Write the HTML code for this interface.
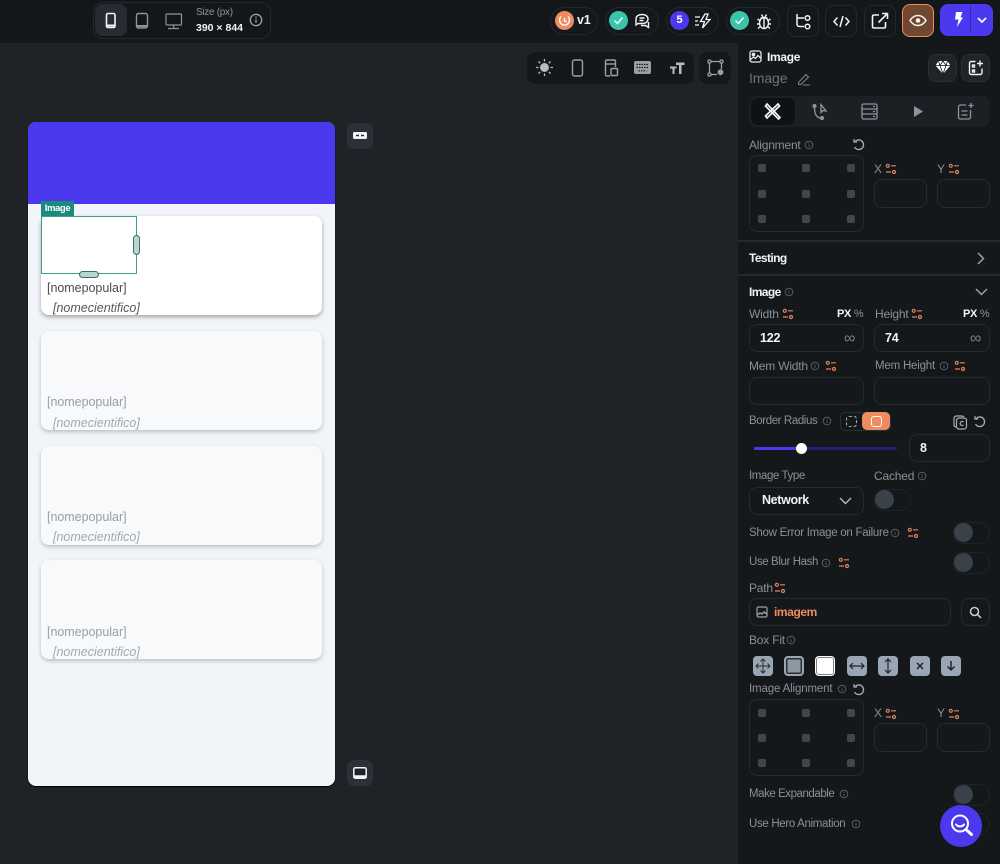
<!DOCTYPE html>
<html><head><meta charset="utf-8">
<style>
*{box-sizing:border-box}
html,body{margin:0;padding:0;width:1000px;height:864px;overflow:hidden;background:#1f2327;font-family:"Liberation Sans",sans-serif}
.a{position:absolute}
.t{position:absolute;white-space:nowrap;font-size:12px;line-height:14px;color:#8a9097;letter-spacing:-.2px}
.n{font-size:11.5px;letter-spacing:-.4px}
.w{color:#f1f4f8;font-weight:700}
.sec{font-size:12px;letter-spacing:-.6px}
.box{position:absolute;border:1.5px solid #252a2e;border-radius:8px;background:#14181b}
.s{position:absolute;overflow:visible;fill:none}
.tog{position:absolute;width:37px;height:22px;border:1.5px solid #1f2428;border-radius:11px}
.tog:before{content:"";position:absolute;left:0;top:0;width:19px;height:19px;border-radius:50%;background:#39414a}
.dot{position:absolute;width:8px;height:8px;background:#3f464e;border-radius:2px}
.pill{position:absolute;height:28px;top:7px;border:1.5px solid #23282c;border-radius:14px;background:#14181b}
.sq{position:absolute;top:5px;width:32px;height:32px;border:1.5px solid #23282c;border-radius:8px;background:#14181b}
.card{position:absolute;left:41px;width:281px;height:99px;background:#f8f9fb;border-radius:8px;box-shadow:0 2px 4px rgba(0,0,0,.22)}
.np{position:absolute;left:6px;font-size:12.5px;line-height:14px;color:#9a9ea3;white-space:nowrap;letter-spacing:-.03px}
.ns{position:absolute;left:12px;font-size:12.5px;line-height:14px;font-style:italic;color:#a3a7ac;white-space:nowrap}
.bf{position:absolute;top:656px;width:20px;height:20px;border-radius:4px;background:#9aa6b3}
</style></head><body>
<svg width="0" height="0" style="position:absolute"><defs>
<symbol id="v" viewBox="0 0 12 12"><g fill="none" stroke="#e2835a" stroke-width="1.200"><circle cx="2.800" cy="2.800" r="1.500"/><circle cx="9" cy="9" r="1.500"/><path d="M6 2.800h5M1 9h5"/></g></symbol>
<symbol id="i" viewBox="0 0 12 12"><g fill="none" stroke="#5f666d" stroke-width="1"><circle cx="6" cy="6" r="4.600"/><path d="M6 5.500v3M6 3.500v1"/></g></symbol>
<symbol id="r" viewBox="0 0 14 14"><g fill="none" stroke="#a8adb3" stroke-width="1.300" stroke-linecap="round"><path d="M3.500 3.200A4.800 4.800 0 1 1 2.800 9.500"/><path d="M2 1.500v2.500h2.600"/></g></symbol>
</defs></svg>

<!-- top bar -->
<div class="a" style="left:0;top:0;width:1000px;height:43px;background:#14171a"></div>
<div class="a" style="left:93px;top:2px;width:178px;height:37px;border:1.500px solid #23282c;border-radius:10px"></div>
<div class="a" style="left:95px;top:4px;width:32px;height:32px;background:#262c31;border-radius:8px"></div>
<svg class="s" style="left:105px;top:12px" width="12" height="17" stroke="#f1f4f8" stroke-width="1.600"><rect x="1.500" y="1.500" width="8.500" height="14" rx="1.500"/><path d="M1.500 13.500h8.500" stroke-width="2"/></svg>
<svg class="s" style="left:135px;top:12px" width="15" height="18" stroke="#8e949b" stroke-width="1.400"><rect x="1.500" y="1.500" width="11" height="14.500" rx="2"/><path d="M1.500 14h11" stroke-width="2"/></svg>
<svg class="s" style="left:165px;top:13px" width="18" height="17" stroke="#8e949b" stroke-width="1.200"><rect x="1" y="1" width="15.500" height="11" rx="1"/><path d="M3 15.500h11M8.700 12v3"/></svg>
<div class="t" style="left:196px;top:6px;font-size:10px;letter-spacing:-.3px;color:#8e949b">Size (px)</div>
<div class="t w" style="left:196px;top:21px;font-size:10.500px;letter-spacing:0">390 × 844</div>
<svg class="s" style="left:249px;top:13px" width="14" height="14" stroke="#9aa0a6" stroke-width="1.300"><circle cx="7" cy="7" r="5.700"/><path d="M7 6.300v3.600M7 3.600v1.400"/></svg>

<div class="pill" style="left:550px;width:48px"></div>
<div class="a" style="left:555px;top:11px;width:19px;height:19px;border-radius:50%;background:#ee8b60"></div>
<svg class="s" style="left:558px;top:14px" width="13" height="13" stroke="#fff" stroke-width="1.400"><path d="M3 2.500A5 5 0 1 0 10 2.500M6.500 4v3l2 1"/></svg>
<div class="t w" style="left:577px;top:13px;font-size:12.500px">v1</div>

<div class="pill" style="left:605px;width:54px"></div>
<div class="a" style="left:609px;top:11px;width:19px;height:19px;border-radius:50%;background:#39c4ab"></div>
<svg class="s" style="left:613px;top:15px" width="11" height="11" stroke="#e8fffa" stroke-width="1.500"><path d="M1.500 5.500l3 3 5-6"/></svg>
<svg class="s" style="left:634px;top:13px" width="17" height="16" stroke="#f1f4f8" stroke-width="1.400"><path d="M8 1.500c3.500 0 6 1.800 6 4.500S11.500 10.500 8 10.500H4L2 12V6c0-2.700 2.500-4.500 6-4.500z"/><path d="M5.500 5h5M5.500 7.500h4M7 12.500h4.500l3 2V9"/></svg>

<div class="pill" style="left:666px;width:53px"></div>
<div class="a" style="left:670px;top:11px;width:19px;height:19px;border-radius:50%;background:#4b39ef;color:#fff;font-size:11px;font-weight:700;text-align:center;line-height:19px">5</div>
<svg class="s" style="left:694px;top:13px" width="18" height="16"><path d="M11 1L6.500 8.500h4L8.500 15 16 6.500h-4L14 1z" stroke="#f1f4f8" stroke-width="1.300"/><path d="M1 4h5M1 8h3M1 12h4" stroke="#f1f4f8" stroke-width="1.300"/></svg>

<div class="pill" style="left:726px;width:54px"></div>
<div class="a" style="left:730px;top:11px;width:19px;height:19px;border-radius:50%;background:#39c4ab"></div>
<svg class="s" style="left:734px;top:15px" width="11" height="11" stroke="#e8fffa" stroke-width="1.500"><path d="M1.500 5.500l3 3 5-6"/></svg>
<svg class="s" style="left:756px;top:13px" width="16" height="17" stroke="#f1f4f8" stroke-width="1.400"><ellipse cx="8" cy="10" rx="4.500" ry="5.500"/><path d="M4.500 5h7M8 5v10M1.500 6l3 2M14.500 6l-3 2M1 11h2.500M15 11h-2.500M2 15.500l2.500-2M14 15.500l-2.500-2M5.500 1.500L7 4M10.500 1.500L9 4"/></svg>

<div class="sq" style="left:787px"></div>
<svg class="s" style="left:795px;top:13px" width="17" height="17" stroke="#f1f4f8" stroke-width="1.500"><path d="M2 1v10c0 1.500 1 2.500 2.500 2.500H9M2 5h7"/><circle cx="12.500" cy="5" r="2.300"/><circle cx="12.500" cy="13.500" r="2.300"/></svg>
<div class="sq" style="left:825px"></div>
<svg class="s" style="left:833px;top:15px" width="17" height="13" stroke="#f1f4f8" stroke-width="1.500"><path d="M4.500 2.500L1 6.500l3.500 4M12.500 2.500l3.500 4-3.500 4M10 1L7 12"/></svg>
<div class="sq" style="left:864px"></div>
<svg class="s" style="left:871px;top:12px" width="18" height="18" stroke="#f1f4f8" stroke-width="1.600"><path d="M8 3H3c-1 0-1.500.5-1.500 1.500v10c0 1 .5 1.500 1.500 1.500h10c1 0 1.500-.5 1.500-1.500V10M7.500 10.500L16 2M11 1.500h5.500V7"/></svg>
<div class="a" style="left:902px;top:4px;width:32px;height:33px;background:#70472f;border:1.500px solid #ee8b60;border-radius:8px"></div>
<svg class="s" style="left:909px;top:14px" width="18" height="13" stroke="#f1f4f8" stroke-width="1.500"><path d="M1 6.500C3.500 2.500 6 1.500 9 1.500s5.500 1 8 5c-2.500 4-5 5-8 5s-5.500-1-8-5z"/><circle cx="9" cy="6.500" r="2.300" fill="#f1f4f8" stroke="none"/></svg>
<div class="a" style="left:940px;top:4px;width:53px;height:32px;background:#4b39ef;border-radius:8px"></div>
<div class="a" style="left:970px;top:6px;width:1px;height:27px;background:#3526b8"></div>
<svg class="s" style="left:953px;top:11px" width="11" height="17"><path d="M3 1h6.500L7.500 6.500H10L4 16l1.500-7.500H2z" fill="#fff"/></svg>
<svg class="s" style="left:977px;top:17px" width="10" height="7" stroke="#fff" stroke-width="1.700"><path d="M1 1l4 4 4-4"/></svg>

<!-- canvas toolbar -->
<div class="a" style="left:527px;top:52px;width:167px;height:32px;background:#14181b;border-radius:8px"></div>
<div class="a" style="left:699px;top:52px;width:32px;height:32px;background:#14181b;border-radius:8px"></div>
<svg class="s" style="left:536px;top:59px" width="17" height="17" stroke="#b7bcc2" stroke-width="1.300"><circle cx="8.500" cy="8.500" r="3.800" fill="#b7bcc2"/><path d="M8.500 0v2.500M8.500 14.500V17M0 8.500h2.500M14.500 8.500H17M2.500 2.500l1.700 1.700M12.800 12.800l1.700 1.700M2.500 14.500l1.700-1.700M12.800 4.200l1.700-1.700"/></svg>
<svg class="s" style="left:571px;top:59px" width="13" height="18" stroke="#9aa0a6" stroke-width="1.400"><rect x="1.500" y="1" width="10" height="16" rx="2"/></svg>
<svg class="s" style="left:604px;top:59px" width="14" height="18" stroke="#9aa0a6" stroke-width="1.400"><path d="M6 17H3c-1 0-1.500-.5-1.500-1.500v-13C1.500 1.500 2 1 3 1h7c1 0 1.500.5 1.500 1.500V8"/><rect x="7" y="9.500" width="6.500" height="7" rx="1"/><path d="M1.500 5h10"/></svg>
<svg class="s" style="left:634px;top:61px" width="17" height="13"><rect width="17" height="13" rx="2" fill="#9aa0a6"/><path d="M2.500 3.500h12M2.500 6.500h12M4.500 9.800h8" stroke="#14181b" stroke-width="1.200" stroke-dasharray="1.500 1"/></svg>
<svg class="s" style="left:670px;top:61px" width="15" height="13"><path d="M6 1.500h8.500v2.500h-3v9H9V4H6zM0 5.500h6.500v2H4.500V13H2.500V7.500H0z" fill="#b7bcc2"/></svg>
<svg class="s" style="left:707px;top:59px" width="17" height="18" stroke="#9aa0a6" stroke-width="1.300"><rect x="1" y="1" width="3" height="3" rx="1.300"/><rect x="13" y="1" width="3" height="3" rx="1.300"/><rect x="1" y="14" width="3" height="3" rx="1.300"/><path d="M4 2.500h9M2.500 4v10M4 15.500h6M14.500 4v6"/><path d="M13.500 10l2.800 1.700v3L13.500 16.500l-2.800-1.800v-3z" fill="#9aa0a6" stroke="none"/></svg>

<!-- phone -->
<div class="a" style="left:28px;top:122px;width:307px;height:664px;background:#f1f4f8;border-radius:8px;overflow:hidden;box-shadow:0 1px 1px #000">
  <div class="a" style="left:0;top:0;width:307px;height:82px;background:#4b39ef"></div>
</div>
<div class="card" style="top:216px;background:#fff;box-shadow:0 2px 4px rgba(0,0,0,.33)">
  <div class="np" style="top:65px;color:#4a4d50">[nomepopular]</div>
  <div class="ns" style="top:85px;color:#55585b">[nomecientifico]</div>
</div>
<div class="card" style="top:331px"><div class="np" style="top:64px">[nomepopular]</div><div class="ns" style="top:85px">[nomecientifico]</div></div>
<div class="card" style="top:446px"><div class="np" style="top:64px">[nomepopular]</div><div class="ns" style="top:84px">[nomecientifico]</div></div>
<div class="card" style="top:560px"><div class="np" style="top:65px">[nomepopular]</div><div class="ns" style="top:85px">[nomecientifico]</div></div>

<div class="a" style="left:41px;top:216px;width:96px;height:58px;border:1px solid #3f9c8f"></div>
<div class="a" style="left:41px;top:201px;width:33px;height:15px;background:#1c8a7c;color:#fff;font-size:9.500px;line-height:15px;text-align:center;font-weight:700;letter-spacing:-.4px">Image</div>
<div class="a" style="left:133px;top:235px;width:7px;height:20px;background:#b7d6d0;border:1px solid #3e6f68;border-radius:3.500px"></div>
<div class="a" style="left:79px;top:270.500px;width:20px;height:7px;background:#b7d6d0;border:1px solid #3e6f68;border-radius:3.500px"></div>

<div class="a" style="left:347px;top:123px;width:26px;height:26px;background:#2b3137;border-radius:7px"></div>
<svg class="s" style="left:353px;top:132px" width="14" height="7"><rect width="14" height="7" rx="1.500" fill="#f1f4f8"/><path d="M3 3.500h3M8 3.500h3" stroke="#2b3137" stroke-width="1.500"/></svg>
<div class="a" style="left:347px;top:760px;width:26px;height:26px;background:#2b3137;border-radius:7px"></div>
<svg class="s" style="left:353px;top:767px" width="14" height="12"><rect x=".8" y=".8" width="12.400" height="10.400" rx="1.500" fill="#1f2327" stroke="#f1f4f8" stroke-width="1.500"/><path d="M1 9.500h12" stroke="#f1f4f8" stroke-width="2.500"/></svg>

<!-- right panel -->
<div class="a" style="left:738px;top:43px;width:262px;height:821px;background:#14181b"></div>
<svg class="s" style="left:749px;top:50px" width="13" height="13" stroke="#e5e8eb" stroke-width="1.300"><rect x="1" y="1" width="11" height="11" rx="2"/><circle cx="4.500" cy="4.500" r="1.200" fill="#e5e8eb"/><path d="M1 10l3.500-3 2 1.500 2.500-3 3 3" /></svg>
<div class="t w" style="left:767px;top:50px;font-size:12px;letter-spacing:-.3px">Image</div>
<div class="t" style="left:749px;top:70px;font-size:14px;line-height:16px;color:#6c727a;letter-spacing:-.1px">Image</div>
<svg class="s" style="left:797px;top:72px" width="14" height="14" stroke="#7a8087" stroke-width="1.100"><path d="M1.500 10.500L9 2.500l2.500 2.500-7.500 7.500H1.500zM6 13h7"/></svg>
<div class="a" style="left:928px;top:54px;width:29px;height:28px;background:#1f2428;border:1px solid #2a2f34;border-radius:8px"></div>
<svg class="s" style="left:935px;top:60px" width="16" height="15"><path d="M3.500 1h9l3 4.500L8 14 .5 5.500z" fill="#fff"/><path d="M.5 5.500h15M5 5.500L8 14l3-8.500M3.500 1L5 5.500 8 1l3 4.500L12.500 1" stroke="#14181b" stroke-width=".8" fill="none"/></svg>
<div class="a" style="left:961px;top:54px;width:29px;height:28px;background:#1f2428;border:1px solid #2a2f34;border-radius:8px"></div>
<svg class="s" style="left:968px;top:60px" width="16" height="16" stroke="#f1f4f8" stroke-width="1.400"><path d="M7.500 1.500H3.500c-1.300 0-2 .7-2 2v9c0 1.300.7 2 2 2h8.500c1.300 0 2-.7 2-2V8.500"/><rect x="4.500" y="5" width="2" height="2"/><rect x="4.500" y="10" width="2" height="2"/><path d="M12 .5v6M9 3.500h6"/></svg>

<div class="a" style="left:749px;top:96px;width:241px;height:31px;background:#1b2024;border-radius:8px"></div>
<div class="a" style="left:751px;top:98px;width:44px;height:27px;background:#0f1214;border-radius:7px"></div>
<svg class="s" style="left:764px;top:102px" width="17" height="18" stroke="#f1f4f8" stroke-width="1.700"><path d="M3 2l13 13.500-1.500 1.500L1.500 4zM14 2L1.500 14l1.500 2L15.500 4z"/></svg>
<svg class="s" style="left:812px;top:103px" width="18" height="17" stroke="#8e949b" stroke-width="1.300"><circle cx="2.500" cy="3" r="1.500" fill="#8e949b"/><circle cx="10" cy="15" r="1.500" fill="#8e949b"/><path d="M2.500 4.500c0 5 1 10 6 10.500M9 1.500v8l2-2 3 .5z"/></svg>
<svg class="s" style="left:861px;top:103px" width="17" height="17" stroke="#8e949b" stroke-width="1.300"><rect x="1" y="1" width="15" height="15" rx="1.500"/><path d="M1 6h15M1 11h15M12 3.500h2M12 8.500h2M12 13.500h2"/></svg>
<svg class="s" style="left:913px;top:105px" width="11" height="13"><path d="M1 1l9 5.500L1 12z" fill="#8e949b"/></svg>
<svg class="s" style="left:957px;top:103px" width="17" height="17" stroke="#8e949b" stroke-width="1.300"><path d="M9 2H3.500C2.300 2 1.500 2.800 1.500 4v10c0 1.200.8 2 2 2h8c1.200 0 2-.8 2-2V7M4.500 8h6M4.500 12h6M14 0v5M11.500 2.500h5"/></svg>

<div class="t" style="left:749px;top:138px;font-size:12px">Alignment</div>
<svg class="s" style="left:804px;top:140px" width="10" height="10"><use href="#i"/></svg>
<svg class="s" style="left:852px;top:138px" width="14" height="14"><use href="#r"/></svg>
<div class="box" style="left:749px;top:155px;width:115px;height:77px"></div>
<div class="dot" style="left:758px;top:164px"></div><div class="dot" style="left:802px;top:164px"></div><div class="dot" style="left:847px;top:164px"></div>
<div class="dot" style="left:758px;top:190px"></div><div class="dot" style="left:802px;top:190px"></div><div class="dot" style="left:847px;top:190px"></div>
<div class="dot" style="left:758px;top:215px"></div><div class="dot" style="left:802px;top:215px"></div><div class="dot" style="left:847px;top:215px"></div>
<div class="t" style="left:874px;top:162px;font-size:12px">X</div>
<svg class="s" style="left:885px;top:163px" width="12" height="12"><use href="#v"/></svg>
<div class="t" style="left:937px;top:162px;font-size:12px">Y</div>
<svg class="s" style="left:948px;top:163px" width="12" height="12"><use href="#v"/></svg>
<div class="box" style="left:874px;top:179px;width:53px;height:29px"></div>
<div class="box" style="left:937px;top:179px;width:53px;height:29px"></div>

<div class="a" style="left:738px;top:240px;width:262px;height:1.500px;background:#24292d"></div>
<div class="t w sec" style="left:749px;top:251px">Testing</div>
<svg class="s" style="left:977px;top:252px" width="8" height="13" stroke="#9aa0a6" stroke-width="1.500"><path d="M1 1l5.500 5.500L1 12"/></svg>
<div class="a" style="left:738px;top:274px;width:262px;height:1.500px;background:#24292d"></div>
<div class="t w sec" style="left:749px;top:285px">Image</div>
<svg class="s" style="left:784px;top:287px" width="10" height="10"><use href="#i"/></svg>
<svg class="s" style="left:975px;top:288px" width="13" height="8" stroke="#9aa0a6" stroke-width="1.500"><path d="M1 1l5.500 5.500L12 1"/></svg>

<div class="t" style="left:749px;top:307px">Width</div>
<svg class="s" style="left:782px;top:308px" width="12" height="12"><use href="#v"/></svg>
<div class="t w" style="left:837px;top:307px;font-size:11px;letter-spacing:-.3px">PX <span style="color:#8e949b;font-weight:400">%</span></div>
<div class="t" style="left:875px;top:307px">Height</div>
<svg class="s" style="left:911px;top:308px" width="12" height="12"><use href="#v"/></svg>
<div class="t w" style="left:963px;top:307px;font-size:11px;letter-spacing:-.3px">PX <span style="color:#8e949b;font-weight:400">%</span></div>
<div class="box" style="left:749px;top:324px;width:115px;height:28px"></div>
<div class="t w" style="left:760px;top:331px;font-size:12.500px">122</div>
<div class="t" style="left:844px;top:332px;font-size:16px;color:#7a8087">∞</div>
<div class="box" style="left:874px;top:324px;width:116px;height:28px"></div>
<div class="t w" style="left:885px;top:331px;font-size:12.500px">74</div>
<div class="t" style="left:970px;top:332px;font-size:16px;color:#7a8087">∞</div>

<div class="t" style="left:749px;top:359px">Mem Width</div>
<svg class="s" style="left:810px;top:361px" width="10" height="10"><use href="#i"/></svg>
<svg class="s" style="left:825px;top:360px" width="12" height="12"><use href="#v"/></svg>
<div class="t n" style="left:875px;top:359px;letter-spacing:-.2px">Mem Height</div>
<svg class="s" style="left:939px;top:361px" width="10" height="10"><use href="#i"/></svg>
<svg class="s" style="left:954px;top:360px" width="12" height="12"><use href="#v"/></svg>
<div class="box" style="left:749px;top:377px;width:115px;height:28px"></div>
<div class="box" style="left:874px;top:377px;width:116px;height:28px"></div>

<div class="t n" style="left:749px;top:414px">Border Radius</div>
<svg class="s" style="left:822px;top:416px" width="10" height="10"><use href="#i"/></svg>
<div class="a" style="left:840px;top:412px;width:51px;height:19px;border:1px solid #2a2f34;border-radius:5px"></div>
<svg class="s" style="left:846px;top:416px" width="11" height="11" stroke="#9aa0a6" stroke-width="1.100" stroke-dasharray="3 2"><rect x=".5" y=".5" width="10" height="10" rx="2.500"/></svg>
<div class="a" style="left:862px;top:412px;width:28px;height:18px;background:#ee8b60;border-radius:5px"></div>
<div class="a" style="left:871px;top:416px;width:11px;height:11px;border:1.200px solid #fff;border-radius:3px"></div>
<svg class="s" style="left:953px;top:415px" width="14" height="15" stroke="#a8adb3" stroke-width="1.200"><rect x="3.500" y="3" width="10" height="11" rx="2.500"/><path d="M3.500 12C1.500 12 1 11 1 9.500V3.500C1 2 2 1 3.500 1H9c1 0 1.500.5 2 1"/><path d="M10.500 7a2 2 0 1 0 0 3"/></svg>
<svg class="s" style="left:973px;top:415px" width="14" height="14"><use href="#r"/></svg>
<div class="a" style="left:754px;top:447px;width:143px;height:3px;background:#261d7a;border-radius:2px"></div>
<div class="a" style="left:754px;top:447px;width:48px;height:3px;background:#4b39ef;border-radius:2px"></div>
<div class="a" style="left:796px;top:443px;width:11px;height:11px;background:#fff;border-radius:50%"></div>
<div class="box" style="left:909px;top:434px;width:81px;height:28px"></div>
<div class="t w" style="left:920px;top:441px;font-size:12.500px">8</div>

<div class="t n" style="left:749px;top:469px">Image Type</div>
<div class="t" style="left:874px;top:469px">Cached</div>
<svg class="s" style="left:917px;top:471px" width="10" height="10"><use href="#i"/></svg>
<div class="box" style="left:749px;top:487px;width:115px;height:28px"></div>
<div class="t w" style="left:762px;top:493px;font-size:12.500px;letter-spacing:-.35px">Network</div>
<svg class="s" style="left:839px;top:497px" width="13" height="8" stroke="#b7bcc2" stroke-width="1.400"><path d="M1 1l5.500 5.500L12 1"/></svg>
<div class="tog" style="left:874px;top:489px"></div>

<div class="t n" style="left:749px;top:526px;letter-spacing:-.27px">Show Error Image on Failure</div>
<svg class="s" style="left:890px;top:528px" width="10" height="10"><use href="#i"/></svg>
<svg class="s" style="left:907px;top:527px" width="12" height="12"><use href="#v"/></svg>
<div class="tog" style="left:953px;top:522px"></div>
<div class="t n" style="left:749px;top:555px">Use Blur Hash</div>
<svg class="s" style="left:821px;top:558px" width="10" height="10"><use href="#i"/></svg>
<svg class="s" style="left:838px;top:557px" width="12" height="12"><use href="#v"/></svg>
<div class="tog" style="left:953px;top:552px"></div>
<div class="t" style="left:749px;top:581px">Path</div>
<svg class="s" style="left:774px;top:582px" width="12" height="12"><use href="#v"/></svg>
<div class="box" style="left:749px;top:598px;width:202px;height:28px"></div>
<svg class="s" style="left:756px;top:606px" width="12" height="12" stroke="#9aa0a6" stroke-width="1.200"><rect x="1" y="1" width="10" height="10" rx="1.500"/><path d="M1 9l3-2 2 1 2-2 3 2" stroke-width="1.500"/></svg>
<div class="t" style="left:774px;top:605px;font-size:12px;font-weight:700;color:#ee8b60;letter-spacing:-.4px">imagem</div>
<div class="box" style="left:961px;top:598px;width:29px;height:28px"></div>
<svg class="s" style="left:969px;top:606px" width="13" height="13" stroke="#c9ced3" stroke-width="1.500"><circle cx="5.500" cy="5.500" r="4"/><path d="M8.500 8.500l3.500 3.500"/></svg>
<div class="t" style="left:749px;top:633px">Box Fit</div>
<svg class="s" style="left:786px;top:635px" width="10" height="10"><use href="#i"/></svg>

<div class="bf" style="left:753px"></div>
<svg class="s" style="left:755px;top:658px" width="16" height="16" stroke="#2a2f34" stroke-width="1"><path d="M8 1v14M1 8h14M5.500 3.500L8 1l2.500 2.500M5.500 12.500L8 15l2.500-2.500M3.500 5.500L1 8l2.500 2.500M12.500 5.500L15 8l-2.500 2.500" stroke-dasharray="none"/></svg>
<div class="bf" style="left:784px;border:2.500px solid #9aa6b3;background:#8e98a3;box-shadow:inset 0 0 0 1.500px #2a2f34"></div>
<div class="bf" style="left:815px;background:#fff;border:1.500px solid #fff;box-shadow:inset 0 0 0 1px #7a8087"></div>
<div class="bf" style="left:847px"></div>
<svg class="s" style="left:849px;top:661px" width="16" height="10" stroke="#1f2327" stroke-width="1.200"><path d="M1 5h14M4 2L1 5l3 3M12 2l3 3-3 3"/></svg>
<div class="bf" style="left:878px"></div>
<svg class="s" style="left:883px;top:658px" width="10" height="16" stroke="#1f2327" stroke-width="1.200"><path d="M5 1v14M2 4l3-3 3 3M2 12l3 3 3-3"/></svg>
<div class="bf" style="left:910px"></div>
<svg class="s" style="left:916px;top:662px" width="8" height="8" stroke="#1f2327" stroke-width="1.500"><path d="M1 1l6 6M7 1L1 7"/></svg>
<div class="bf" style="left:941px"></div>
<svg class="s" style="left:946px;top:660px" width="10" height="12" stroke="#1f2327" stroke-width="1.500"><path d="M5 1v9M1.500 6.500L5 10l3.500-3.500"/></svg>

<div class="t n" style="left:749px;top:682px;letter-spacing:-.15px">Image Alignment</div>
<svg class="s" style="left:837px;top:684px" width="10" height="10"><use href="#i"/></svg>
<svg class="s" style="left:852px;top:683px" width="14" height="14"><use href="#r"/></svg>
<div class="box" style="left:749px;top:699px;width:115px;height:77px"></div>
<div class="dot" style="left:758px;top:709px"></div><div class="dot" style="left:802px;top:709px"></div><div class="dot" style="left:847px;top:709px"></div>
<div class="dot" style="left:758px;top:734px"></div><div class="dot" style="left:802px;top:734px"></div><div class="dot" style="left:847px;top:734px"></div>
<div class="dot" style="left:758px;top:759px"></div><div class="dot" style="left:802px;top:759px"></div><div class="dot" style="left:847px;top:759px"></div>
<div class="t" style="left:874px;top:706px">X</div>
<svg class="s" style="left:885px;top:708px" width="12" height="12"><use href="#v"/></svg>
<div class="t" style="left:937px;top:706px">Y</div>
<svg class="s" style="left:948px;top:708px" width="12" height="12"><use href="#v"/></svg>
<div class="box" style="left:874px;top:723px;width:53px;height:29px"></div>
<div class="box" style="left:937px;top:723px;width:53px;height:29px"></div>

<div class="t n" style="left:749px;top:787px;letter-spacing:-.45px">Make Expandable</div>
<svg class="s" style="left:839px;top:789px" width="10" height="10"><use href="#i"/></svg>
<div class="tog" style="left:953px;top:784px"></div>
<div class="t n" style="left:749px;top:817px;letter-spacing:-.33px">Use Hero Animation</div>
<svg class="s" style="left:851px;top:819px" width="10" height="10"><use href="#i"/></svg>
<div class="tog" style="left:953px;top:813px"></div>
<div class="a" style="left:940px;top:805px;width:42px;height:42px;background:#4b39ef;border-radius:50%"></div>
<svg class="s" style="left:949px;top:813px" width="26" height="26" stroke="#fff" stroke-width="2" stroke-linecap="round"><circle cx="11" cy="10.500" r="8"/><path d="M7 11.500c2 2.500 6 2.500 8 0"/><path d="M17 16.500l5.500 5" stroke-width="3"/></svg>
</body></html>
